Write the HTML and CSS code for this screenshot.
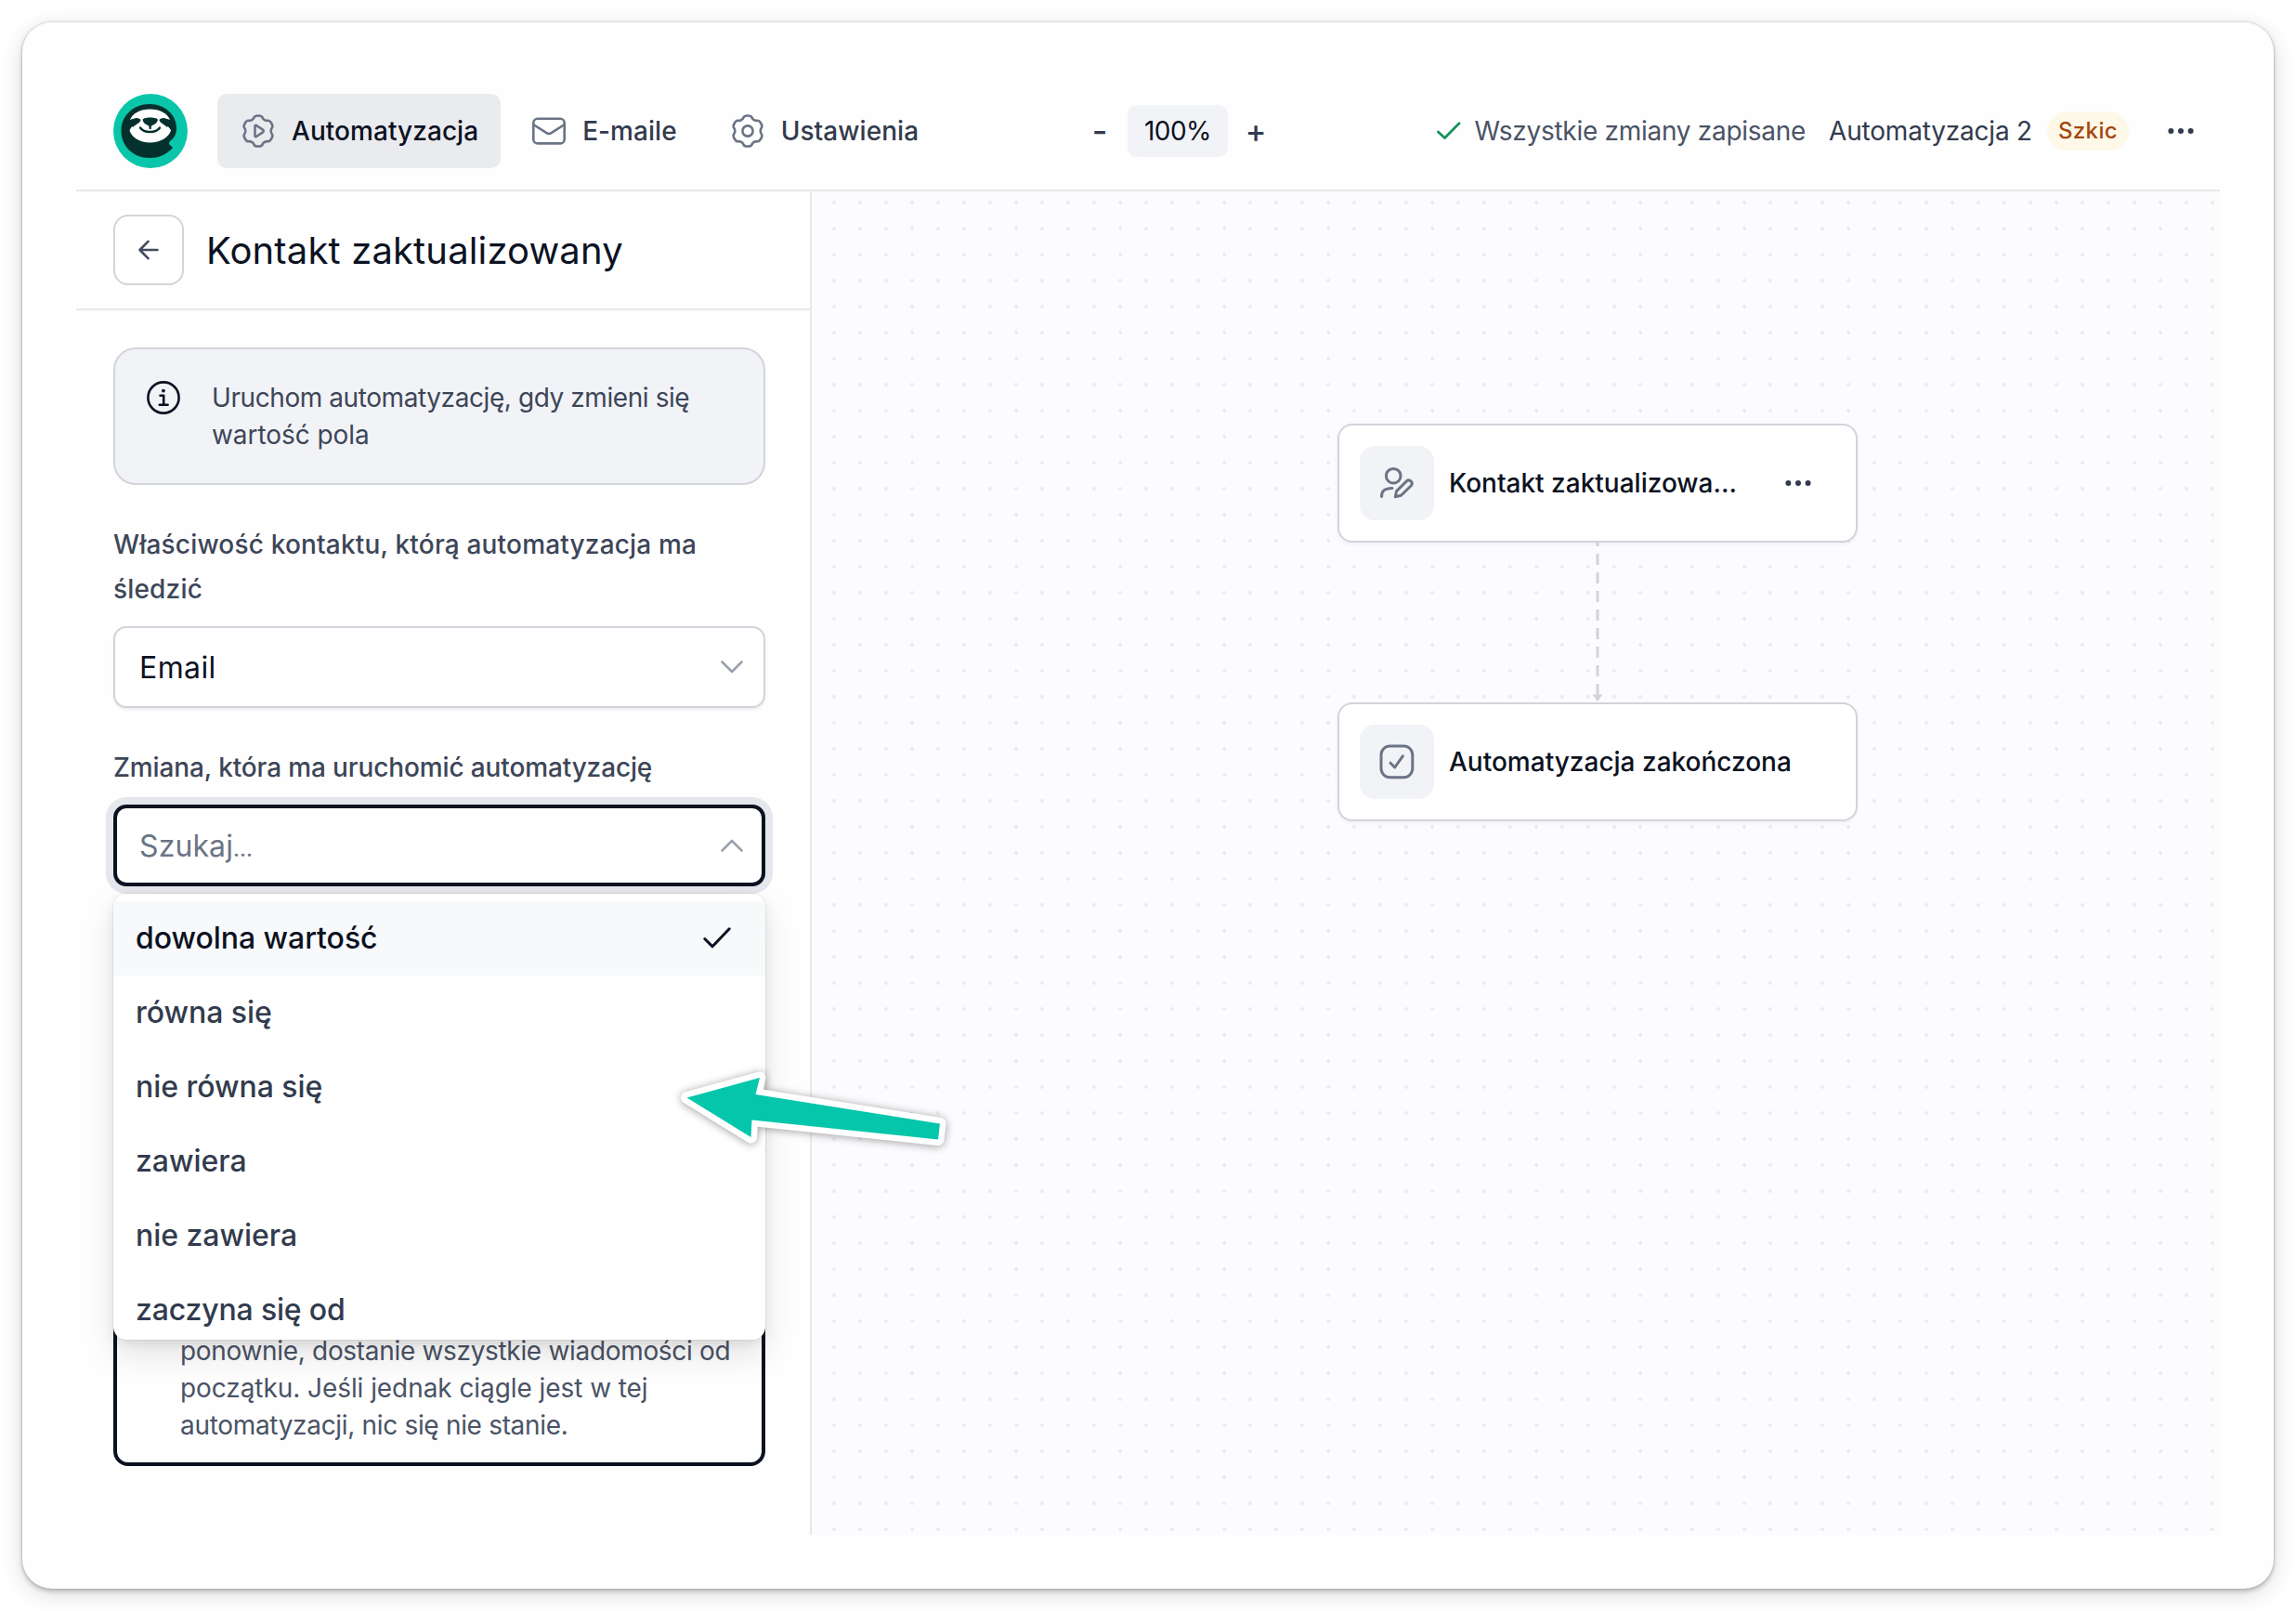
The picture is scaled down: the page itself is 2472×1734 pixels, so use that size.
FILE: index.html
```
<!DOCTYPE html>
<html lang="pl">
<head>
<meta charset="utf-8">
<title>Automatyzacja 2</title>
<link rel="stylesheet" href="styles.css">
</head>
<body>
<svg class="defs" width="0" height="0" aria-hidden="true">
  <symbol id="gear" viewBox="0 0 36 36">
    <path d="M18 1.53Q21.8 1.53 22.39 3.27Q22.98 5.02 24.87 6.11Q26.75 7.2 28.56 6.83Q30.36 6.47 32.26 9.76Q34.16 13.06 32.95 14.44Q31.73 15.83 31.73 18Q31.73 20.17 32.95 21.56Q34.16 22.94 32.26 26.24Q30.36 29.53 28.56 29.17Q26.75 28.8 24.87 29.89Q22.98 30.98 22.39 32.73Q21.8 34.47 18 34.47Q14.2 34.47 13.61 32.73Q13.02 30.98 11.13 29.89Q9.25 28.8 7.44 29.17Q5.64 29.53 3.74 26.24Q1.84 22.94 3.05 21.56Q4.27 20.17 4.27 18Q4.27 15.83 3.05 14.44Q1.84 13.06 3.74 9.76Q5.64 6.47 7.44 6.83Q9.25 7.2 11.13 6.11Q13.02 5.02 13.61 3.27Q14.2 1.53 18 1.53Z"/>
  </symbol>
</svg>
<div class="window">
  <header class="topbar">
    <div class="topbar-left">
      <svg class="logo" viewBox="0 0 80 80">
        <circle cx="40" cy="40" r="40" fill="#09c5a9"/>
        <path fill="#04312d" d="M39 11C55 11 68 22 68 37C68 43 66 47 61.500 50.500C60 52 59.500 53.500 60.500 54.500L64 58C57 66 48 69 39 69C21 69 8.500 56 8.500 40C8.500 23 22 11 39 11Z"/>
        <path fill="#fff" d="M39.500 16.500C50 16.500 58.500 21 61 28C58 27.500 55 25.500 52.500 26.500C57 28 59 31.500 57.500 34C59 35 61.500 37.500 62 39.500C60 46.500 50.500 52.500 39.500 52.500C28.500 52.500 19.500 46.500 17.500 39.500C18 37.500 20 35 21.500 34C20.500 31.500 22 28 26.500 26.500C24 25.500 21 27.500 18 28C20.500 21 29 16.500 39.500 16.500Z"/>
        <path fill="#04312d" d="M32 27C36 25 43.500 25 47.500 27C49 29.500 45 33 41 34.500L40.700 38H38.700L38.300 34.500C34.500 33 30.500 29.500 32 27Z"/>
        <path fill="#04312d" d="M17.500 29C22 25.500 28 25.500 29.500 28C29.500 31 24.500 32.500 21 36C19 33 19 31 17.500 29ZM61.500 29C57 25.500 51 25.500 49.500 28C49.500 31 54.500 32.500 58 36C60 33 60 31 61.500 29Z"/>
        <path fill="none" stroke="#04312d" stroke-width="2.400" stroke-linecap="round" d="M29 36.500C33 42.500 46 42.500 50 36.500"/>
      </svg>
      <nav class="tabs">
        <a class="tab tab-active">
          <svg class="tab-icon" viewBox="0 0 36 36"><use href="#gear"/><path d="M14.500 12.600V23.400Q14.800 24.600 16 24L23.300 19.100Q24.300 18 23.300 16.900L16 12Q14.800 11.400 14.500 12.600Z"/></svg>
          Automatyzacja
        </a>
        <a class="tab">
          <svg class="tab-icon" viewBox="0 0 36 36"><rect x="1.300" y="4.800" width="33.400" height="26.600" rx="4.500"/><path d="M2 11.500L15.500 20.200Q18 21.600 20.500 20.200L34 11.500"/></svg>
          E-maile
        </a>
        <a class="tab">
          <svg class="tab-icon" viewBox="0 0 36 36"><use href="#gear"/><circle cx="18" cy="18" r="5.600"/></svg>
          Ustawienia
        </a>
      </nav>
    </div>
    <div class="zoom">
      <span class="zoom-btn">-</span>
      <span class="zoom-value">100%</span>
      <span class="zoom-btn zoom-plus">+</span>
    </div>
    <div class="status">
      <svg class="saved-icon" viewBox="0 0 26 20"><path d="M1.500 11L8.500 17.500L24 1.800"/></svg>
      <span class="saved">Wszystkie zmiany zapisane</span>
      <span class="doc-name">Automatyzacja 2</span>
      <span class="badge">Szkic</span>
      <svg class="dots" viewBox="0 0 28 8"><circle cx="3.400" cy="4" r="3"/><circle cx="14" cy="4" r="3"/><circle cx="24.600" cy="4" r="3"/></svg>
    </div>
  </header>

  <div class="workspace">
    <aside class="sidebar">
      <div class="panel-head">
        <button class="back"><svg viewBox="0 0 22 22"><path d="M20.500 11H1.500M10.500 1.800L1.500 11L10.500 20.200"/></svg></button>
        <h1 class="panel-title">Kontakt zaktualizowany</h1>
      </div>
      <div class="panel-body">
        <div class="info">
          <svg class="info-icon" viewBox="0 0 36 36"><circle cx="18" cy="18" r="16.600"/><path d="M14.500 15.800H18.200V25.500M13.800 25.700H22.600"/><circle class="info-dot" cx="17.900" cy="10.600" r="1.900"/></svg>
          <p class="info-text">Uruchom automatyzację, gdy zmieni się <span class="loose">wartość pola</span></p>
        </div>

        <div class="field">
          <label class="label">Właściwość kontaktu, którą automatyzacja ma śledzić</label>
          <div class="select">
            <span>Email</span>
            <svg class="chevron" viewBox="0 0 24 14"><path d="M1.500 1.500L12 12L22.500 1.500"/></svg>
          </div>
        </div>

        <div class="field">
          <label class="label label-tight">Zmiana, która ma uruchomić automatyzację</label>
          <div class="select select-focus">
            <span class="placeholder">Szukaj<span class="ellipsis">…</span></span>
            <svg class="chevron" viewBox="0 0 24 14"><path d="M1.500 12.500L12 2L22.500 12.500"/></svg>
          </div>
          <ul class="menu">
            <li class="option option-selected">dowolna wartość
              <svg class="check" viewBox="0 0 30 23"><path d="M1.800 12.500L10 20.800L28.200 1.800"/></svg>
            </li>
            <li class="option">równa się</li>
            <li class="option">nie równa się</li>
            <li class="option">zawiera</li>
            <li class="option">nie zawiera</li>
            <li class="option option-tight">zaczyna się od</li>
          </ul>
        </div>

        <div class="choice">
          <p class="choice-text">ponownie, dostanie wszystkie wiadomości od <span class="loose">początku. Jeśli jednak ciągle jest w tej</span> automatyzacji, nic się nie stanie.</p>
        </div>
      </div>
    </aside>

    <main class="canvas">
      <div class="node node-start">
        <div class="node-icon"><svg viewBox="0 0 80 80"><circle cx="36.200" cy="32.200" r="7.800"/><path d="M23.500 54.500C23.300 48.500 27 45.300 35 45.400M38.300 54.700L39.600 48.600L50.400 37.900C53.800 35.200 58 39.300 55.300 42.700L44.500 53.300Z"/></svg></div>
        <span class="node-title">Kontakt zaktualizowa…</span>
        <svg class="dots node-dots" viewBox="0 0 28 8"><circle cx="3.400" cy="4" r="3"/><circle cx="14" cy="4" r="3"/><circle cx="24.600" cy="4" r="3"/></svg>
      </div>
      <svg class="edge" viewBox="0 0 16 172"><path class="edge-line" d="M8 0V168"/><path class="edge-head" d="M2.500 163.500H13.500L8 171Z"/></svg>
      <div class="node node-end">
        <div class="node-icon"><svg viewBox="0 0 80 80"><rect x="23" y="23" width="33.800" height="33.800" rx="9.500"/><path d="M33 41.200L37.700 46L46.300 33.800"/></svg></div>
        <span class="node-title">Automatyzacja zakończona</span>
      </div>
    </main>
  </div>

  <svg class="pointer" viewBox="0 0 320 110">
    <path d="M19.500 51.500L98 30L93.500 48L292 79.500L290 96.500L89.500 75.500L88.500 94Z"/>
  </svg>
</div>
</body>
</html>
```

FILE: styles.css
```
* { box-sizing: border-box; }
body {
  margin: 0;
  background: #fff;
  font-family: Inter, "Liberation Sans", sans-serif;
  font-size: 28px;
  color: #0c1222;
}
p, h1, ul { margin: 0; padding: 0; }
svg { display: block; flex: none; fill: none; stroke-linecap: round; stroke-linejoin: round; }
.defs { position: absolute; }

.window {
  position: relative;
  width: 2424px;
  height: 1686px;
  margin: 24px;
  padding: 54px 58px 58px;
  border-radius: 32px;
  background: #fefefe;
  box-shadow: 0 0 3px rgba(0, 0, 0, .2), 0 3px 5px rgba(0, 0, 0, .2), 0 6px 26px rgba(0, 0, 0, .14);
}

/* Top bar */
.topbar {
  display: flex;
  align-items: center;
  height: 128px;
  padding: 0 28px 0 40px;
  border-bottom: 2px solid #e7e8ea;
}
.topbar-left { display: flex; align-items: center; gap: 32px; width: 1042px; }
.logo { width: 80px; height: 80px; }
.tabs { display: flex; gap: 8px; }
.tab {
  display: flex;
  align-items: center;
  gap: 18px;
  height: 80px;
  padding: 0 24px 0 26px;
  border-radius: 10px;
  font-weight: 500;
  letter-spacing: .05px;
  color: #323b4d;
}
.tab-active { background: #eaebef; color: #0c1222; }
.tab-icon { width: 36px; height: 36px; stroke: #6b7485; stroke-width: 2.6; }
.zoom { display: flex; align-items: center; gap: 10px; }
.zoom-btn { width: 40px; text-align: center; font-size: 36px; font-weight: 500; color: #323b4d; }
.zoom-plus { padding-bottom: 2px; font-size: 34px; }
.zoom-value {
  width: 108px;
  line-height: 56px;
  border-radius: 10px;
  background: #f2f3f7;
  text-align: center;
  letter-spacing: -.5px;
}
.status { display: flex; align-items: center; margin-left: auto; white-space: nowrap; }
.saved-icon { width: 26px; height: 20px; margin-right: 14px; stroke: #16915a; stroke-width: 2.8; }
.saved { margin-right: 25px; letter-spacing: -.28px; color: #4a5365; }
.doc-name { margin-right: 16px; letter-spacing: -.2px; color: #323b4d; }
.badge {
  width: 88px;
  margin-right: 42px;
  border-radius: 21px;
  background: #fef8e8;
  text-align: center;
  font-size: 24px;
  font-weight: 500;
  line-height: 42px;
  letter-spacing: .35px;
  color: #a4480f;
}
.dots { width: 28px; height: 8px; fill: #323b4d; }

/* Sidebar */
.workspace { display: flex; height: 1446px; }
.sidebar { width: 792px; flex: none; border-right: 2px solid #e7e8ea; }
.panel-head {
  display: flex;
  align-items: center;
  gap: 24px;
  height: 128px;
  padding-left: 40px;
  border-bottom: 2px solid #e7e8ea;
}
.back {
  display: grid;
  place-items: center;
  width: 76px;
  height: 76px;
  padding: 0;
  border: 2px solid #d1d4da;
  border-radius: 16px;
  background: #fff;
}
.back svg { width: 22px; height: 22px; stroke: #424b5d; stroke-width: 2.6; }
.panel-title { font-size: 40px; font-weight: 400; letter-spacing: .15px; }
.panel-body { display: flex; flex-direction: column; gap: 40px; padding: 40px 48px 0 40px; }
.info {
  display: flex;
  gap: 34px;
  height: 148px;
  padding: 32px 34px;
  border: 2px solid #d1d4da;
  border-radius: 24px;
  background: #f2f3f7;
}
.info-icon { width: 36px; height: 36px; margin-top: 2px; stroke: #0c1222; stroke-width: 2.6; }
.info-dot { fill: #0c1222; stroke: none; }
.info-text { width: 540px; line-height: 40px; letter-spacing: -.42px; color: #3d4658; }
.loose { letter-spacing: -.07px; }
.field { position: relative; display: flex; flex-direction: column; gap: 16px; }
.label { line-height: 48px; font-weight: 500; letter-spacing: .18px; color: #3d4658; }
.label-tight { letter-spacing: -.13px; }
.select {
  display: flex;
  align-items: center;
  justify-content: space-between;
  height: 88px;
  padding: 0 22px 0 26px;
  border: 2px solid #d1d4da;
  border-radius: 14px;
  background: #fff;
  box-shadow: 0 2px 3px rgba(12, 18, 34, .07);
  font-size: 32px;
  letter-spacing: .4px;
}
.select-focus {
  padding: 0 20px 0 24px;
  border: 4px solid #0c1222;
  box-shadow: 0 0 0 8px #e6e7ec;
}
.placeholder { letter-spacing: .1px; color: #6b7485; }
.ellipsis { font-size: .72em; font-weight: 500; }
.chevron { width: 24px; height: 14px; stroke: #9aa1ae; stroke-width: 2.6; }

/* Menu hanging below the focused select */
.menu {
  position: absolute;
  top: 160px;
  left: 0;
  z-index: 2;
  width: 702px;
  height: 480px;
  padding-top: 8px;
  overflow: hidden;
  border-radius: 14px;
  background: #fff;
  box-shadow: 0 0 0 1px rgba(12, 18, 34, .05), 0 4px 12px rgba(0, 0, 0, .08), 0 16px 36px rgba(0, 0, 0, .11);
  list-style: none;
}
.option {
  display: flex;
  align-items: center;
  justify-content: space-between;
  height: 80px;
  padding: 0 37px 1px 24px;
  font-size: 32px;
  font-weight: 500;
  letter-spacing: -.04px;
  color: #323b4d;
}
.option-tight { letter-spacing: -.17px; }
.option-selected { background: #f8f9fb; color: #0c1222; }
.check { width: 30px; height: 23px; stroke: #0c1222; stroke-width: 3; }

.choice {
  display: flex;
  align-items: flex-end;
  height: 584px;
  padding: 20px 20px 20px 68px;
  border: 4px solid #0c1222;
  border-radius: 16px;
}
.choice-text { line-height: 40px; letter-spacing: -.32px; color: #4a5365; }

/* Canvas */
.canvas {
  position: relative;
  flex: 1;
  background: #fcfcfe radial-gradient(circle, #ebecef 1.6px, transparent 2.3px) 10px -2px / 28px 28px;
}
.node {
  position: absolute;
  left: 566px;
  display: flex;
  align-items: center;
  width: 560px;
  height: 128px;
  padding-left: 22px;
  border: 2px solid #d1d4da;
  border-radius: 16px;
  background: #fff;
  box-shadow: 0 2px 4px rgba(12, 18, 34, .05);
}
.node-start { top: 250px; }
.node-end { top: 550px; }
.node-icon { width: 80px; height: 80px; margin-right: 16px; border-radius: 16px; background: #f2f3f7; }
.node-icon svg { stroke: #6b7485; stroke-width: 3; }
.node-title { font-weight: 500; white-space: nowrap; }
.node-dots { margin: 0 48px 0 auto; }
.edge { position: absolute; left: 838px; top: 378px; width: 16px; height: 172px; }
.edge-line { stroke: #d1d4da; stroke-width: 3; stroke-linecap: butt; stroke-dasharray: 12 8; stroke-dashoffset: 8; }
.edge-head { fill: #d1d4da; }

/* Callout arrow */
.pointer {
  position: absolute;
  left: 696px;
  top: 1106px;
  z-index: 3;
  width: 320px;
  height: 110px;
  overflow: visible;
  fill: #04c6aa;
  stroke: #fff;
  stroke-width: 13px;
  paint-order: stroke;
  filter: drop-shadow(0 1px 5px rgba(0, 0, 0, .38));
}
```
